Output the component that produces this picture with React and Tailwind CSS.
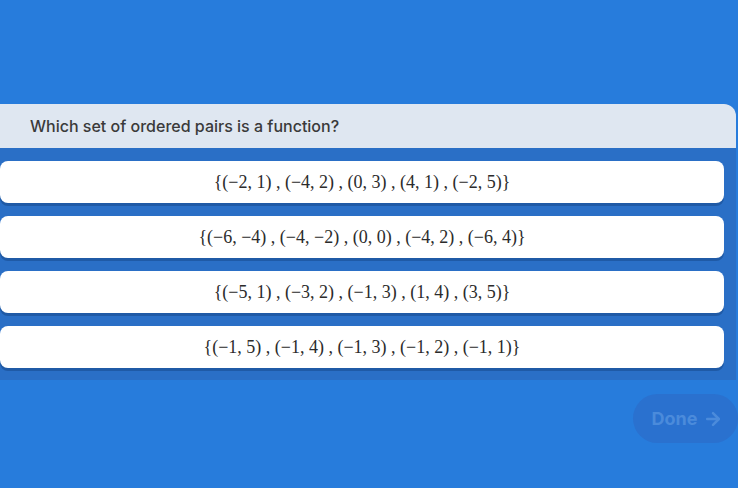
import { ArrowRight } from 'lucide-react';

const options = [
  ['(−2, 1)', '(−4, 2)', '(0, 3)', '(4, 1)', '(−2, 5)'],
  ['(−6, −4)', '(−4, −2)', '(0, 0)', '(−4, 2)', '(−6, 4)'],
  ['(−5, 1)', '(−3, 2)', '(−1, 3)', '(1, 4)', '(3, 5)'],
  ['(−1, 5)', '(−1, 4)', '(−1, 3)', '(−1, 2)', '(−1, 1)'],
];

function MathSet({ pairs }) {
  return (
    <span className="font-['Liberation_Serif',serif] text-[18px] text-[#2b2b2b] whitespace-pre">
      {'{'}
      {pairs.map((p, i) => (
        <span key={i}>
          {i > 0 && <span> , </span>}
          {p}
        </span>
      ))}
      {'}'}
    </span>
  );
}

export default function App() {
  return (
    <div className="w-[738px] h-[488px] overflow-hidden bg-[#277cdc] font-['Inter',sans-serif]">
      <div className="h-[104px]" />

      {/* Question panel */}
      <section className="w-[736px] bg-[#2a6fc6] rounded-tr-[12px] pb-[12px]">
        <div className="h-[44px] bg-[#dfe7f1] rounded-tr-[12px] flex items-center pl-[30px]">
          <span className="text-[16px] text-[#3a3a3a] font-medium">
            Which set of ordered pairs is a function?
          </span>
        </div>

        <div className="flex flex-col gap-[13px] pt-[13px] w-[724px]">
          {options.map((pairs, i) => (
            <button
              key={i}
              className="h-[42px] bg-white rounded-[8px] shadow-[0_3px_0_#1f5aa6] flex items-center justify-center"
            >
              <MathSet pairs={pairs} />
            </button>
          ))}
        </div>
      </section>

      <div className="flex justify-end mt-[14px]">
        <button className="h-[49px] w-[105px] rounded-full bg-[#2a71cf] flex items-center justify-center gap-[6px] text-[#4b8bdb] font-bold text-[18px] pl-[4px]">
          Done
          <ArrowRight size={20} strokeWidth={3} />
        </button>
      </div>
    </div>
  );
}
